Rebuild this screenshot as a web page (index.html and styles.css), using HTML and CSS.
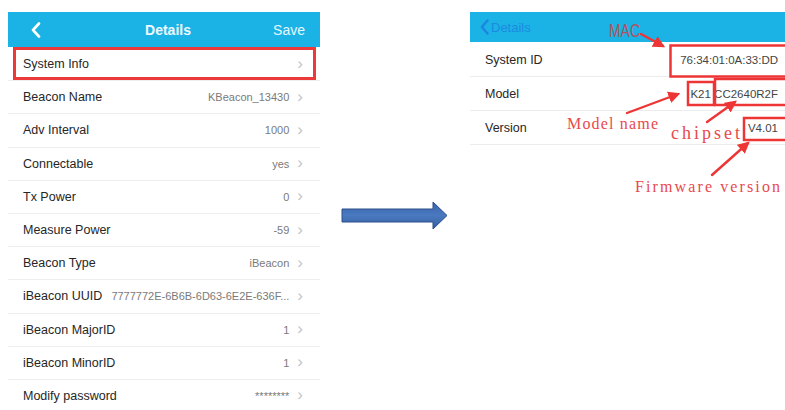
FILE: index.html
```html
<!DOCTYPE html>
<html>
<head>
<meta charset="utf-8">
<link rel="stylesheet" href="styles.css">
</head>
<body>
<div class="page">
  <section class="phone left">
    <header class="bar">
      <span class="back"><svg width="10" height="16" viewBox="0 0 10 16"><path d="M8 1.5 L2 8 L8 14.5" fill="none" stroke="#fff" stroke-width="2.6" stroke-linecap="round" stroke-linejoin="round"/></svg></span>
      <span class="title">Details</span>
      <span class="save">Save</span>
    </header>
    <ul class="list">
      <li class="row hl"><span class="label">System Info</span><span class="value"></span><span class="chev">›</span></li>
      <li class="row"><span class="label">Beacon Name</span><span class="value">KBeacon_13430</span><span class="chev">›</span></li>
      <li class="row"><span class="label">Adv Interval</span><span class="value">1000</span><span class="chev">›</span></li>
      <li class="row"><span class="label">Connectable</span><span class="value">yes</span><span class="chev">›</span></li>
      <li class="row"><span class="label">Tx Power</span><span class="value">0</span><span class="chev">›</span></li>
      <li class="row"><span class="label">Measure Power</span><span class="value">-59</span><span class="chev">›</span></li>
      <li class="row"><span class="label">Beacon Type</span><span class="value">iBeacon</span><span class="chev">›</span></li>
      <li class="row"><span class="label">iBeacon UUID</span><span class="value">7777772E-6B6B-6D63-6E2E-636F...</span><span class="chev">›</span></li>
      <li class="row"><span class="label">iBeacon MajorID</span><span class="value">1</span><span class="chev">›</span></li>
      <li class="row"><span class="label">iBeacon MinorID</span><span class="value">1</span><span class="chev">›</span></li>
      <li class="row"><span class="label">Modify password</span><span class="value">********</span><span class="chev">›</span></li>
    </ul>
  </section>

  <div class="mid">
    <svg class="bigarrow" width="150" height="60" viewBox="0 0 150 60">
      <defs>
        <linearGradient id="ab" x1="0" y1="0" x2="0" y2="1">
          <stop offset="0" stop-color="#3a64a8"/>
          <stop offset="0.5" stop-color="#4a79c0"/>
          <stop offset="1" stop-color="#355e9f"/>
        </linearGradient>
      </defs>
      <polygon points="22,18 113,18 113,11 127,24.5 113,38 113,31 22,31" fill="url(#ab)" stroke="#2c4f8c" stroke-width="1"/>
    </svg>
  </div>

  <section class="phone right">
    <header class="bar bar2">
      <span class="back2"><svg width="9" height="16" viewBox="0 0 9 16"><path d="M7.5 1.5 L1.8 8 L7.5 14.5" fill="none" stroke="#1e7fe0" stroke-width="2.4" stroke-linecap="round" stroke-linejoin="round"/></svg>Details</span>
    </header>
    <ul class="list2">
      <li class="row2"><span class="label">System ID</span><span class="value2">76:34:01:0A:33:DD</span></li>
      <li class="row2"><span class="label">Model</span><span class="value2">K21 CC2640R2F</span></li>
      <li class="row2"><span class="label">Version</span><span class="value2">V4.01</span></li>
    </ul>
  </section>

  <svg class="notes" width="785" height="410" viewBox="0 0 785 410">
    <defs>
      <marker id="ah" viewBox="0 0 10 10" refX="8" refY="5" markerWidth="5" markerHeight="5" orient="auto" markerUnits="strokeWidth">
        <path d="M0 0 L10 5 L0 10 Z" fill="#ee3535"/>
      </marker>
    </defs>
    <g fill="none" stroke="#ee3535" stroke-width="2.5">
      <rect x="670.5" y="45.5" width="116" height="31"/>
      <rect x="688" y="82" width="26" height="23"/>
      <rect x="715" y="79" width="72" height="26"/>
      <rect x="744" y="118" width="43" height="22"/>
    </g>
    <g stroke="#ee3535" stroke-width="2.4" stroke-linecap="round" marker-end="url(#ah)">
      <line x1="641" y1="34" x2="663" y2="46"/>
      <line x1="627" y1="113" x2="678" y2="94"/>
      <line x1="707" y1="122" x2="735" y2="102"/>
      <line x1="712" y1="175" x2="748" y2="143"/>
    </g>
    <g class="ann" fill="#e9494c">
      <text x="609" y="37" class="mac" textLength="31" lengthAdjust="spacingAndGlyphs">MAC</text>
      <text x="567" y="129" textLength="91" lengthAdjust="spacing">Model name</text>
      <text x="671" y="139" class="chip" textLength="69" lengthAdjust="spacing">chipset</text>
      <text x="635" y="192" textLength="145" lengthAdjust="spacing">Firmware version</text>
    </g>
  </svg>
</div>
</body>
</html>
```

FILE: styles.css
```css
* { box-sizing: border-box; }
html, body { margin: 0; padding: 0; background: #fff; }
body { font-family: "Liberation Sans", Arial, sans-serif; }
.page {
  position: relative;
  width: 785px;
  height: 410px;
  overflow: hidden;
  display: flex;
  align-items: flex-start;
  padding-top: 12px;
}
.phone.left { margin-left: 8px; width: 312px; }
.bar {
  height: 35px;
  background: #1bb3e6;
  display: grid;
  grid-template-columns: 1fr auto 1fr;
  align-items: center;
  padding: 0 15px 0 23px;
  color: #fff;
}
.back { display: flex; align-items: center; }
.title { font-size: 14px; font-weight: bold; color: #eefaff; }
.save { justify-self: end; font-size: 14px; color: #e6f7fd; }
.list, .list2 { list-style: none; margin: 0; padding: 0; }
.list { padding-top: 1px; }
.row {
  position: relative;
  height: 33.2px;
  display: flex;
  align-items: center;
  padding: 0 17px 0 15px;
  border-bottom: 1px solid #eeeeee;
}
.row.hl::after {
  content: "";
  position: absolute;
  left: 5px; right: 4px; top: -1px; bottom: 0;
  border: 3px solid #ec3a3a;
}
.label { font-size: 12.5px; color: #262626; }
.value { margin-left: auto; font-size: 11px; color: #7a7a7a; margin-right: 8px; }
.chev { font-size: 17px; color: #c4c4c8; line-height: 1; margin-top: -2px; }

.mid { width: 150px; padding-top: 179px; }
.bigarrow { display: block; }

.phone.right { width: 315px; }
.bar2 {
  height: 30px;
  display: flex;
  align-items: center;
  padding: 0 0 0 10px;
}
.back2 { display: flex; align-items: center; gap: 2px; color: #1e86e2; font-size: 13px; opacity: 0.9; }
.row2 {
  height: 34px;
  display: flex;
  align-items: center;
  padding: 0 7px 0 15px;
  border-bottom: 1px solid #ececec;
}
.row2:first-child { margin-top: 1px; }
.value2 { margin-left: auto; font-size: 11.5px; color: #444; }

.notes { position: absolute; left: 0; top: 0; pointer-events: none; }
.ann text { font-family: "Liberation Serif", "DejaVu Serif", serif; font-size: 16px; }
.ann .mac { font-family: "Liberation Sans Narrow", "Liberation Sans", sans-serif; font-size: 18px; fill: #b4525c; }
.ann .chip { font-size: 18px; }
```
